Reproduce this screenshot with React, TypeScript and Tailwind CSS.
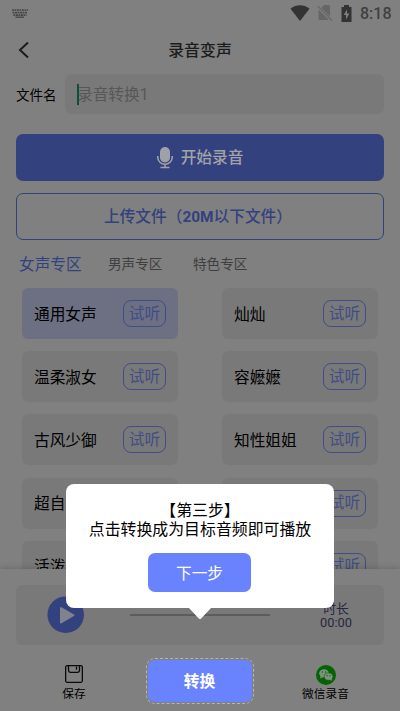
import React from "react";

const voices = [
  "通用女声", "灿灿",
  "温柔淑女", "容嬷嬷",
  "古风少御", "知性姐姐",
  "超自然音", "甜美女声",
  "活泼女孩", "温暖女声",
];

function StatusBar() {
  return (
    <div className="flex h-7 shrink-0 items-center pl-3 pr-[9px] text-[#333]">
      <svg width="16" height="9" viewBox="0 0 16 9" className="-mt-px">
        <path d="M0 1h16M0.5 3.7h15M1.5 6.2h13" stroke="#444" strokeWidth="1.7" strokeDasharray="1.9 0.6" fill="none" />
        <path d="M3.5 8.2h8.5" stroke="#444" strokeWidth="1.3" />
      </svg>
      <div className="ml-auto flex items-center">
        <svg width="20" height="16" viewBox="0 0 20 16" className="mt-[-2px]">
          <path d="M0.5 3.7C6-.9 14-.9 19.500 3.700L10 16Z" fill="#333" />
        </svg>
        <svg width="16" height="16" viewBox="0 0 16 16" className="ml-[7px] mt-[-2px]">
          <path d="M7 0h4.500Q13 0 13 1.500V11.500L4.400 3Z" fill="#666" />
          <path d="M1.500 4.500V13.500Q1.500 15 3 15H12Z" fill="#666" />
          <path d="M.8 1.200 15 15.500" stroke="#666" strokeWidth="1.200" />
        </svg>
        <svg width="11" height="17" viewBox="0 0 11 17" className="ml-[8px] mt-[-2px]">
          <path d="M3 0h5v2h2.500v15H.5V2H3Z" fill="#333" />
          <path d="M6 4.500 2.800 10H5v4.500L8.400 8.500H6Z" fill="#808080" />
        </svg>
        <span className="ml-[8px] w-[31px] whitespace-nowrap font-[Roboto] text-[16px] font-medium leading-7 text-[#404040]">8:18</span>
      </div>
    </div>
  );
}

function VoiceCard({ name, selected }: { name: string; selected: boolean }) {
  return (
    <div className={`flex h-[51px] w-[156px] items-center justify-between rounded-[6px] pl-3 pr-3 ${selected ? "bg-[#6d6f83]" : "bg-[#797979]"}`}>
      <span className="w-[70px] whitespace-nowrap text-[15.700px] leading-6 text-black">{name}</span>
      <span className="flex h-[27px] w-[43px] items-center justify-center rounded-[8px] border border-[#404d86] pb-[2px] text-[15.700px] leading-6 text-[#404d86]">试听</span>
    </div>
  );
}

function Popover() {
  return (
    <div className="absolute left-[66px] top-[484px] flex h-[124px] w-[268px] flex-col items-center rounded-[8px] bg-white pt-[16px] text-[15.900px] leading-[19px] text-black">
      <div>【第三步】</div>
      <div className="whitespace-nowrap">点击转换成为目标音频即可播放</div>
      <button className="mr-px mt-[14.500px] h-[39px] w-[103px] rounded-[7px] bg-[#6983ff] text-[15.700px] text-white">下一步</button>
      <svg width="22" height="11" viewBox="0 0 22 11" className="absolute left-[123px] top-[123.500px]">
        <path d="M0 0h22L12.200 10.500Q11 11.500 9.800 10.500Z" fill="#fff" />
      </svg>
    </div>
  );
}

export default function App() {
  return (
    <div className="relative flex h-[711px] w-[400px] flex-col overflow-hidden bg-[#808080] font-['Noto_Sans_CJK_SC',sans-serif]">
      <StatusBar />
      <header className="flex h-[46px] shrink-0 items-center px-[18px]">
        <svg width="12" height="18" viewBox="0 0 12 18" className="-mt-[2px]">
          <path d="M10 1.500 2 9l8 7.500" stroke="#1c1c1c" strokeWidth="2" fill="none" />
        </svg>
        <h1 className="-mt-[3px] mr-3 flex-1 text-center text-[15.900px] font-medium leading-6 text-[#1c1c1c]">录音变声</h1>
      </header>
      <div className="flex h-10 shrink-0 items-center pl-4 pr-4">
        <label className="w-[49px] whitespace-nowrap text-[13.500px] text-black">文件名</label>
        <div className="flex h-10 flex-1 items-center rounded-[7px] bg-[#797979] pl-3">
          <i className="h-[21px] w-[2px] bg-[#07513c]" />
          <span className="-ml-[2px] text-[15.700px] leading-6 text-[#575757]">录音转换<span className="font-[Roboto]">1</span></span>
        </div>
      </div>
      <button className="mx-4 mt-5 flex h-[47px] shrink-0 items-center justify-center rounded-[7px] bg-[#33417f] text-[15.700px] font-medium text-[#a3a3a7]">
        <svg width="16" height="22" viewBox="0 0 16 22" className="mr-2">
          <rect x="3" y="0" width="10" height="15.500" rx="5" fill="#a0a1a6" />
          <path d="M.8 9v1.500a7.200 6.700 0 0 0 14.400 0V9M8 17.500V21M3.500 20.500h9" stroke="#a0a1a6" strokeWidth="1.600" fill="none" />
        </svg>
        <span className="mt-[-2px]">开始录音</span>
      </button>
      <button className="mx-4 mt-3 h-[47px] shrink-0 whitespace-nowrap rounded-[7px] border border-[#33417f] pr-[4px] text-[15.700px] font-medium text-[#33417f]">上传文件（<b className="font-[Roboto] text-[15.400px] font-bold">20M</b>以下文件）</button>
      <nav className="flex h-12 shrink-0 items-center pl-[19px] text-[#3f3f3f]">
        <span className="w-[89px] text-[15.700px] text-[#33417f]">女声专区</span>
        <span className="mt-[-2px] w-[85px] text-[13.600px]">男声专区</span>
        <span className="mt-[-2px] text-[13.600px]">特色专区</span>
      </nav>
      <main className="grid h-[281px] shrink-0 grid-cols-[156px_156px] content-start gap-x-[44px] gap-y-[12.200px] overflow-hidden px-[22px]">
        {voices.map((name, i) => <VoiceCard key={name} name={name} selected={i === 0} />)}
      </main>
      <footer className="relative flex h-[142px] shrink-0 flex-col bg-[#808080] px-4 pt-4 shadow-[0_-1px_6px_rgba(0,0,0,0.18)]">
        <div className="flex h-[60px] shrink-0 items-center rounded-[6px] bg-[#797979] pl-[31px] pr-[20px]">
          <svg width="38" height="38" viewBox="0 0 38 38">
            <circle cx="18.700" cy="18.700" r="18.300" fill="#33417f" />
            <path d="M14 12v14.500l12.500-7.250Z" fill="#80828c" stroke="#80828c" strokeWidth="2" strokeLinejoin="round" />
          </svg>
          <div className="ml-[45px] h-[2px] w-[140px] bg-[#5c5c5c]" />
          <div className="ml-auto flex w-14 flex-col items-center text-[12.800px] leading-[15px] text-[#27273f]">
            <span>时长</span>
            <span className="font-[Roboto]">00:00</span>
          </div>
        </div>
        <div className="flex h-[66px] items-start justify-between text-[11.700px] leading-[14px] text-black">
          <div className="flex w-[116px] flex-col items-center pt-[20px]">
            <svg width="18" height="18" viewBox="0 0 18 18" fill="none" stroke="#0a0a0a" strokeWidth="1.300">
              <rect x=".65" y=".65" width="16.700" height="16.700" rx="1.500" />
              <path d="M3.500.8V5.500Q3.500 7.300 5.300 7.300h7.400q1.800 0 1.800-1.800V.8M11.500 1.500V4.800" />
            </svg>
            <span className="mt-[3px]">保存</span>
          </div>
          <div className="mt-[13px] flex h-[46px] w-[108px] items-center justify-center rounded-[9px] border border-dashed border-[#b5b5b5]">
            <button className="h-[42px] w-[104px] rounded-[7px] bg-[#6983ff] pb-px text-[15.700px] font-bold text-white">转换</button>
          </div>
          <div className="flex w-[117px] flex-col items-center pt-[20px]">
            <svg width="20" height="20" viewBox="0 0 20 20">
              <circle cx="10" cy="10" r="10" fill="#056305" />
              <ellipse cx="8" cy="8.300" rx="4.800" ry="4" fill="#7e917e" />
              <path d="m4.500 11-.4 2.500 3-1.500Z" fill="#7e917e" />
              <ellipse cx="12.600" cy="11.600" rx="4.300" ry="3.700" fill="#7e917e" stroke="#056305" strokeWidth=".6" />
              <path d="m15.500 13.500.5 2.200-2.800-1.100Z" fill="#7e917e" />
              <g fill="#056305"><circle cx="6.400" cy="7" r=".65" /><circle cx="9.600" cy="7" r=".65" /><circle cx="11.200" cy="10.700" r=".6" /><circle cx="14" cy="10.700" r=".6" /></g>
            </svg>
            <span className="mt-px">微信录音</span>
          </div>
        </div>
      </footer>
      <Popover />
    </div>
  );
}
